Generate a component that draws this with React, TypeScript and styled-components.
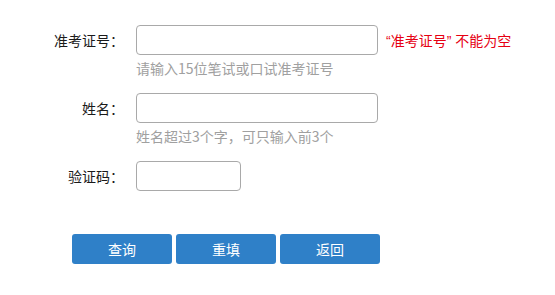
import React from 'react'
import styled, { createGlobalStyle } from 'styled-components'

const GlobalStyle = createGlobalStyle`
  html, body {
    margin: 0;
    padding: 0;
    background: #ffffff;
  }
  body {
    font-family: 'Noto Sans CJK SC', 'Noto Sans', sans-serif;
    font-size: 14px;
    color: #333333;
  }
`

export default function App() {
  return (
    <>
      <GlobalStyle />
      <StyledForm>
        <StyledField>
          <StyledLabel>准考证号：</StyledLabel>
          <StyledControl>
            <StyledInputLine>
              <StyledInput $width={242} type="text" />
              <StyledError>“准考证号” 不能为空</StyledError>
            </StyledInputLine>
            <StyledHint>请输入15位笔试或口试准考证号</StyledHint>
          </StyledControl>
        </StyledField>
        <StyledField>
          <StyledLabel>姓名：</StyledLabel>
          <StyledControl>
            <StyledInputLine>
              <StyledInput $width={242} type="text" />
            </StyledInputLine>
            <StyledHint>姓名超过3个字，可只输入前3个</StyledHint>
          </StyledControl>
        </StyledField>
        <StyledField>
          <StyledLabel>验证码：</StyledLabel>
          <StyledControl>
            <StyledInputLine>
              <StyledInput $width={105} type="text" />
            </StyledInputLine>
          </StyledControl>
        </StyledField>
        <StyledButtonBar>
          <StyledButton>查询</StyledButton>
          <StyledButton>重填</StyledButton>
          <StyledButton>返回</StyledButton>
        </StyledButtonBar>
      </StyledForm>
    </>
  )
}

const StyledForm = styled.form`
  display: flex;
  flex-direction: column;
  padding-top: 25px;
  width: 555px;
`

const StyledField = styled.div`
  display: grid;
  grid-template-columns: 124px 1fr;
  column-gap: 12px;
  margin-bottom: 16px;
`

const StyledLabel = styled.label`
  height: 30px;
  line-height: 30px;
  text-align: right;
  font-size: 14px;
  color: #1a1a1a;
  white-space: nowrap;
`

const StyledControl = styled.div`
  display: flex;
  flex-direction: column;
`

const StyledInputLine = styled.div`
  display: flex;
  align-items: center;
  gap: 8px;
`

const StyledInput = styled.input<{ $width: number }>`
  box-sizing: border-box;
  width: ${(p) => p.$width}px;
  height: 30px;
  border: 1px solid #a9a9a9;
  border-radius: 4px;
  padding: 0 6px;
  background: #ffffff;
  outline: none;
`

const StyledError = styled.span`
  color: #e60012;
  font-family: 'Liberation Sans', 'Noto Sans CJK SC', sans-serif;
  font-size: 14px;
  white-space: nowrap;
`

const StyledHint = styled.div`
  margin-top: 4px;
  height: 18px;
  line-height: 18px;
  font-size: 14px;
  color: #a0a0a0;
  white-space: nowrap;
`

const StyledButtonBar = styled.div`
  display: flex;
  gap: 4px;
  margin-top: 27px;
  padding-left: 72px;
`

const StyledButton = styled.button`
  width: 100px;
  height: 30px;
  border: none;
  border-radius: 3px;
  background: #2f80c8;
  color: #ffffff;
  font-family: 'Noto Sans CJK SC', sans-serif;
  font-size: 14px;
  cursor: pointer;
`
